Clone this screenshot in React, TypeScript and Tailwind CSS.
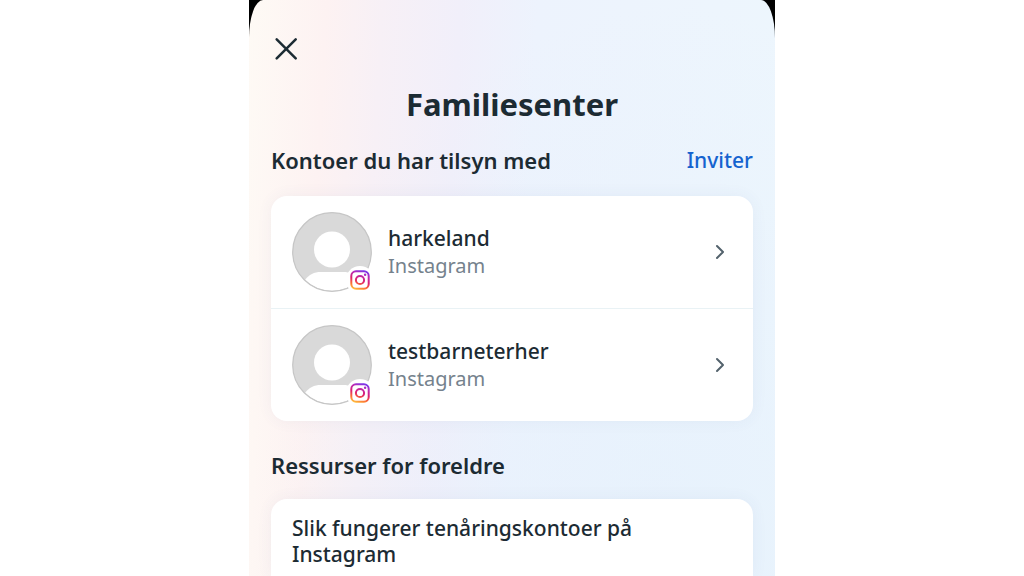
import React from 'react';
import { ChevronRight } from 'lucide-react';

interface Account {
  username: string;
  platform: string;
}

const accounts: Account[] = [
  { username: 'harkeland', platform: 'Instagram' },
  { username: 'testbarneterher', platform: 'Instagram' },
];

const InstagramIcon: React.FC<{ id: string }> = ({ id }) => (
  <svg viewBox="0 0 20 20" className="w-5 h-5" aria-hidden="true">
    <defs>
      <linearGradient id={id} x1="0.25" y1="1" x2="0.6" y2="0">
        <stop offset="0" stopColor="#ffc23d" />
        <stop offset="0.25" stopColor="#fb6a35" />
        <stop offset="0.5" stopColor="#dc2070" />
        <stop offset="0.8" stopColor="#b92bb8" />
        <stop offset="1" stopColor="#7a35e8" />
      </linearGradient>
    </defs>
    <path
      fill={`url(#${id})`}
      fillRule="evenodd"
      d="M6 .3h8A5.700 5.700 0 0 1 19.700 6v8a5.700 5.700 0 0 1-5.700 5.700H6A5.700 5.700 0 0 1 .3 14V6A5.700 5.700 0 0 1 6 .3zM6 2.300A3.700 3.700 0 0 0 2.300 6v8A3.700 3.700 0 0 0 6 17.700h8a3.700 3.700 0 0 0 3.700-3.700V6A3.700 3.700 0 0 0 14 2.300zM10 4.900a5.100 5.100 0 1 1 0 10.200 5.100 5.100 0 0 1 0-10.200zm0 2a3.100 3.100 0 1 0 0 6.200 3.100 3.100 0 0 0 0-6.200zM15.100 3.600a1.250 1.250 0 1 1 0 2.500 1.250 1.250 0 0 1 0-2.500z"
    />
  </svg>
);

const Avatar: React.FC<{ id: string }> = ({ id }) => (
  <div className="relative w-20 h-20 shrink-0">
    <svg viewBox="0 0 80 80" className="w-20 h-20" aria-hidden="true">
      <circle cx="40" cy="40" r="39.500" fill="#d9d9d9" />
      <circle cx="40" cy="37.500" r="18" fill="#fff" />
      <path d="M13 68C17 62.500 22 60 29 60h22c7 0 12 2.500 16 8A39 39 0 0 1 13 68z" fill="#fff" />
      <circle cx="40" cy="40" r="39.300" fill="none" stroke="#c6c6c6" strokeWidth="1.200" />
    </svg>
    <span className="absolute -right-0.5 -bottom-0.5 w-7 h-7 rounded-full bg-white flex items-center justify-center">
      <InstagramIcon id={id} />
    </span>
  </div>
);

const App: React.FC = () => {
  return (
    <div className="min-h-screen bg-white flex justify-center font-['Noto_Sans','Open_Sans',sans-serif] text-[#1c2b33]">
      <div className="w-full max-w-[526px] bg-black flex">
        <main className="w-full flex flex-col rounded-tl-[14px_38px] rounded-tr-[14px_38px] px-[22px] bg-[radial-gradient(ellipse_at_80%_100%,rgba(228,240,252,0.7)_0%,transparent_70%),linear-gradient(93deg,#fefaf5_0%,#fdf2f2_14%,#f7f0f6_24%,#f1effa_38%,#edf3fd_52%,#edf6fd_100%)]">
          <header className="pt-9">
            <button type="button" aria-label="Lukk" className="block ml-1 w-6 h-6">
              <svg viewBox="0 0 24 24" className="w-6 h-6" fill="none" stroke="currentColor" strokeWidth="2.500" strokeLinecap="round">
                <path d="M1.700 3.300l19 19M20.700 3.300l-19 19" />
              </svg>
            </button>
            <h1 className="mt-6 text-[31px] leading-10 font-bold text-center">Familiesenter</h1>
          </header>

          <section>
            <div className="mt-5 flex items-center justify-between">
              <h2 className="text-[22px] leading-8 font-semibold">Kontoer du har tilsyn med</h2>
              <a href="#inviter" className="text-[21px] leading-8 font-medium text-[#1563cf]">Inviter</a>
            </div>

            <ul className="mt-5 bg-white rounded-2xl shadow-[0_0_16px_rgba(60,90,130,0.06)] divide-y divide-[#e9f2f5]">
              {accounts.map((account) => (
                <li key={account.username}>
                  <button type="button" className="w-full flex items-center gap-4 py-4 px-[21px] text-left">
                    <Avatar id={`ig-${account.username}`} />
                    <span className="flex-1 flex flex-col">
                      <span className="text-[21px] leading-7 font-medium">{account.username}</span>
                      <span className="text-[20px] leading-7 text-[#75828d]">{account.platform}</span>
                    </span>
                    <ChevronRight className="w-6 h-6 text-[#53626c]" strokeWidth={2} />
                  </button>
                </li>
              ))}
            </ul>
          </section>

          <section className="flex-1 flex flex-col">
            <h2 className="mt-7 text-[22px] leading-8 font-semibold">Ressurser for foreldre</h2>
            <a
              href="#tenaringskontoer"
              className="mt-[18px] flex-1 block bg-white rounded-t-2xl shadow-[0_0_16px_rgba(60,90,130,0.06)] pt-4 px-[21px]"
            >
              <span className="block max-w-[360px] text-[21px] leading-[26px] font-medium">
                Slik fungerer tenåringskontoer på Instagram
              </span>
            </a>
          </section>
        </main>
      </div>
    </div>
  );
};

export default App;
